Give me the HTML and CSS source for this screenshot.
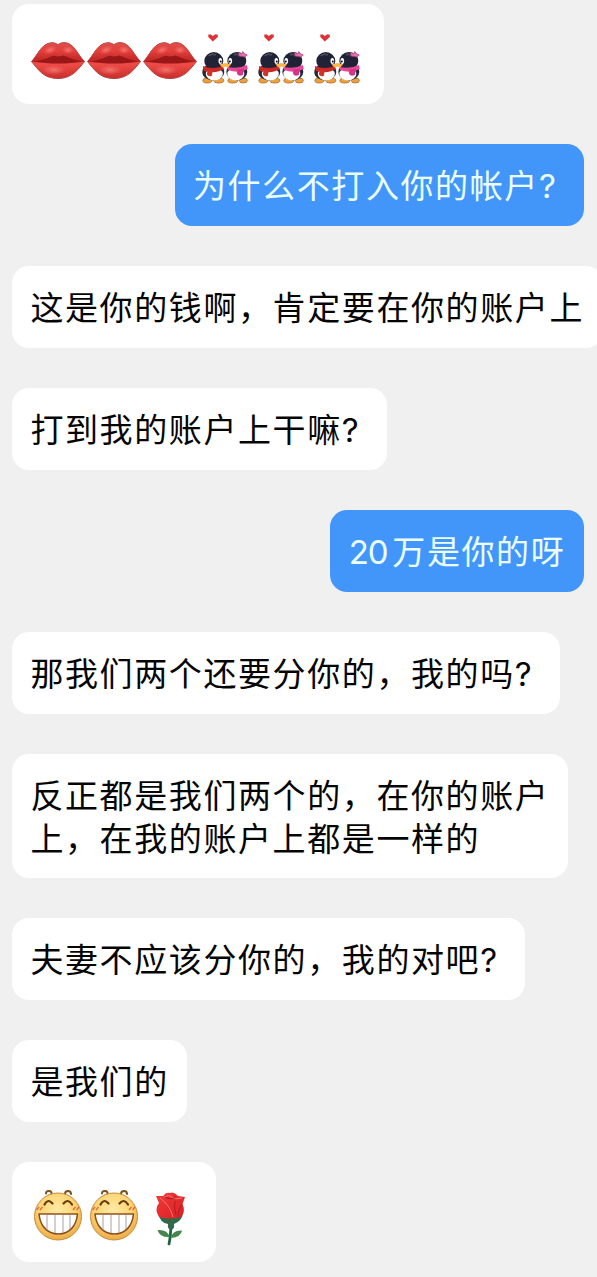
FILE: index.html
```html
<!DOCTYPE html>
<html lang="zh-CN">
<head>
<meta charset="utf-8">
<title>聊天</title>
<link rel="stylesheet" href="styles.css">
</head>
<body>
<svg class="defs" aria-hidden="true">
  <defs>
    <linearGradient id="lipTop" x1="0" y1="0" x2="0" y2="1"><stop offset="0" stop-color="#d8504c"/><stop offset=".4" stop-color="#e5423e"/><stop offset="1" stop-color="#b92322"/></linearGradient>
    <linearGradient id="lipLow" x1="0" y1="0" x2="0" y2="1"><stop offset="0" stop-color="#d42d2a"/><stop offset=".6" stop-color="#ee4b46"/><stop offset="1" stop-color="#c92e2b"/></linearGradient>
    <radialGradient id="skin" cx=".48" cy=".36" r=".65"><stop offset="0" stop-color="#ffeaa5"/><stop offset=".6" stop-color="#fbd472"/><stop offset="1" stop-color="#e9a943"/></radialGradient>
    <radialGradient id="shine"><stop offset="0" stop-color="#ff9a92" stop-opacity=".6"/><stop offset="1" stop-color="#ff8078" stop-opacity="0"/></radialGradient>
    <linearGradient id="petal" x1="0" y1="0" x2="1" y2="1"><stop offset="0" stop-color="#f13b38"/><stop offset="1" stop-color="#d91f25"/></linearGradient>
    <symbol id="lips" viewBox="0 0 56 56">
      <path d="M1.500 35.500C7 30 11 19 19 17.200C23 16 25.500 17 28 18.700C31 16.500 34 16 38 17.300C45 20 48 29 54.500 35.500C49 42 43 52.500 28 52.500C13 52.500 8 43 1.500 35.500Z" fill="url(#lipLow)" stroke="#ad4441" stroke-width="1"/>
      <path d="M1.500 35.500C7 30 11 19 19 17.200C23 16 25.500 17 28 18.700C31 16.500 34 16 38 17.300C45 20 48 29 54.500 35.500C45 37 37 35 28 35.500C19 35 10 37 1.500 35.500Z" fill="url(#lipTop)"/>
      <path d="M3 35.500C13 35 19 31 24 29.500Q28 31.500 33 29.500C39 31 45 35 53 35.500C44 37 38 37.500 28 37.500C19 37.500 12 37 3 35.500Z" fill="#9b1717"/>
      <ellipse cx="20" cy="24" rx="7" ry="4" fill="url(#shine)" transform="rotate(-24 20 24)"/>
      <ellipse cx="38" cy="24" rx="6" ry="4" fill="url(#shine)"/>
      <ellipse cx="24" cy="44" rx="12" ry="5" fill="url(#shine)"/>
    </symbol>
    <symbol id="penguins" viewBox="-.8 0 56 60">
      <path d="M14 15.500L9.500 11V8.500H12L14 10L16 8.500H19V11Z" fill="#dc3437"/>
      <g fill="#f0a038" stroke="#995c24" stroke-width=".7"><ellipse cx="8.500" cy="54.500" rx="4.500" ry="2.500"/><ellipse cx="20" cy="54.500" rx="5" ry="2.500"/><ellipse cx="34" cy="54.500" rx="5" ry="2.500"/><ellipse cx="44.500" cy="54.500" rx="4" ry="2.500"/></g>
      <ellipse cx="14.500" cy="46" rx="11" ry="8.500" fill="#29283a"/><ellipse cx="38" cy="46" rx="10.500" ry="8.500" fill="#29283a"/>
      <ellipse cx="15.500" cy="48" rx="8.500" ry="6.500" fill="#fff"/><ellipse cx="37" cy="48" rx="8.500" ry="6.500" fill="#fff"/>
      <ellipse cx="15" cy="35" rx="9.500" ry="9" fill="#202236"/><ellipse cx="38" cy="35" rx="9.500" ry="9" fill="#202236"/>
      <path d="M10 30Q13 27 17 29" stroke="#454759" stroke-width="2" fill="none"/><path d="M35 29Q38 27 42 30" stroke="#454759" stroke-width="2" fill="none"/>
      <path d="M4 40Q14 44 24 40L25 43Q18 48 5 45Z" fill="#c92927"/><path d="M9 44H14L13 50Q9 51 8 48Z" fill="#d43227"/>
      <path d="M29 41Q40 43 48 39L49 43Q40 48 29 44Z" fill="#e84699"/><path d="M39 43H45L44 49Q39 51 38 47Z" fill="#d53587"/>
      <ellipse cx="21.500" cy="35" rx="1.800" ry="3" fill="#fff"/><ellipse cx="31.500" cy="35" rx="1.800" ry="3" fill="#fff"/>
      <circle cx="22" cy="35.500" r="1" fill="#111"/><circle cx="31" cy="35.500" r="1" fill="#111"/>
      <path d="M20.500 38.500L26.500 37L32.500 38.500L29 41.500L26.500 40.500L24 41.500Z" fill="#ffb64b"/>
      <path d="M40 26L43 28L44 25.500L46 28L48.500 29L46 31L40 30Z" fill="#ed6fae" stroke="#943a72" stroke-width=".7"/>
    </symbol>
    <symbol id="grin" viewBox="0 0 56 60">
      <g fill="none" stroke="#805019" stroke-width="2" stroke-linecap="round"><path d="M16 9.500Q16 6.800 19 7Q22 7.200 21.500 10"/><path d="M35 10Q35 7 38 7Q41 7 41 10"/></g>
      <circle cx="28" cy="32.500" r="23.500" fill="url(#skin)" stroke="#ca8b38" stroke-width="1"/>
      <g fill="none" stroke="#69370e" stroke-width="2.200" stroke-linecap="round"><path d="M14.500 20.500Q18 14 22.500 19.500"/><path d="M33.500 19.500Q38 14 42 20.500"/></g>
      <g stroke="#e46440" stroke-width="1.200"><path d="M6.500 26L9 23M10 26L12.500 23M43 26L45.500 23M46.500 26L49 23"/></g>
      <path d="M9 30H47.500C46.500 41 40 50 28.500 50C16.500 50 10 41 9 30Z" fill="#fff" stroke="#90501c" stroke-width="1.600" stroke-linejoin="round"/>
      <path d="M17 31V46M25 31V49M33 31V49M40 31V45" stroke="#aaa19e" stroke-width="1"/>
    </symbol>
    <symbol id="rose" viewBox="0 0 56 64">
      <path d="M29 36Q29 51 27 60" fill="none" stroke="#206442" stroke-width="2.800" stroke-linecap="round"/>
      <path d="M28 53Q25 45 15.500 46Q18 54 28 53Z" fill="#45864f"/><path d="M29 54Q30 46 40 46.500Q39 53 29 54Z" fill="#46864c"/>
      <path d="M16 29Q18 39 26 40Q25 45 29 46Q33 45 32 40Q40 37 41 29Z" fill="#316a49"/>
      <path d="M14 12L21 12Q24 8 28 9Q32 7 36 12L43 13L40.500 20Q44 28 39 33Q28 36 17 33Q12 25 17 19Z" fill="url(#petal)"/>
      <g fill="none"><path d="M18 14Q28 21 31 33M22 13Q27 10 30 13Q35 16 40 14" stroke="#f77570" stroke-width="1"/><path d="M23 13Q30 17 34 12M34 17Q31 19 34 31M40 20Q36 26 36 33" stroke="#b71e25" stroke-width="1.100"/></g>
    </symbol>
  </defs>
</svg>
<main class="chat">
  <div class="bubble emoji-row">
    <svg class="emoji"><use href="#lips"/></svg><svg class="emoji"><use href="#lips"/></svg><svg class="emoji"><use href="#lips"/></svg>
    <svg class="emoji tall"><use href="#penguins"/></svg><svg class="emoji tall"><use href="#penguins"/></svg><svg class="emoji tall"><use href="#penguins"/></svg>
  </div>
  <div class="bubble mine">为什么不打入你的帐户<span class="mark">?</span></div>
  <div class="bubble">这是你的钱啊，肯定要在你的账户上</div>
  <div class="bubble">打到我的账户上干嘛<span class="mark">?</span></div>
  <div class="bubble mine"><span class="number">20</span>万是你的呀</div>
  <div class="bubble">那我们两个还要分你的，我的吗<span class="mark">?</span></div>
  <div class="bubble two-line">反正都是我们两个的，在你的账户<br>上，在我的账户上都是一样的</div>
  <div class="bubble">夫妻不应该分你的，我的对吧<span class="mark">?</span></div>
  <div class="bubble">是我们的</div>
  <div class="bubble emoji-row">
    <svg class="emoji tall"><use href="#grin"/></svg><svg class="emoji tall"><use href="#grin"/></svg><svg class="emoji rose"><use href="#rose"/></svg>
  </div>
</main>
</body>
</html>
```
FILE: styles.css
```css
* { box-sizing: border-box; }
html, body { margin: 0; overflow: hidden; background: #f0f0f0; }
body { height: 1277px; }
.defs { position: absolute; width: 0; height: 0; }
.chat {
  display: flex;
  flex-direction: column;
  align-items: flex-start;
  gap: 40px;
  padding: 4px 13px 15px 12px;
  font-family: Inter, "Noto Sans CJK SC", sans-serif;
  font-size: 33px;
  line-height: 43px;
  letter-spacing: 1.6px;
  color: #050505;
}
.bubble {
  flex: none;
  padding: 21px 18.700px 18px 18.400px;
  border-radius: 17px;
  background: #fff;
  white-space: nowrap;
}
.two-line { padding-bottom: 17px; }
.mine { align-self: flex-end; background: #4396f9; color: #eaffff; }
.mark { display: inline-block; width: 26.400px; }
.number { display: inline-block; width: 43.500px; letter-spacing: -1.200px; }
.emoji-row { display: flex; height: 100px; padding: 22px 18px; }
.emoji { display: block; flex: none; width: 56px; height: 56px; }
.tall { height: 60px; }
.rose { height: 64px; }
```
